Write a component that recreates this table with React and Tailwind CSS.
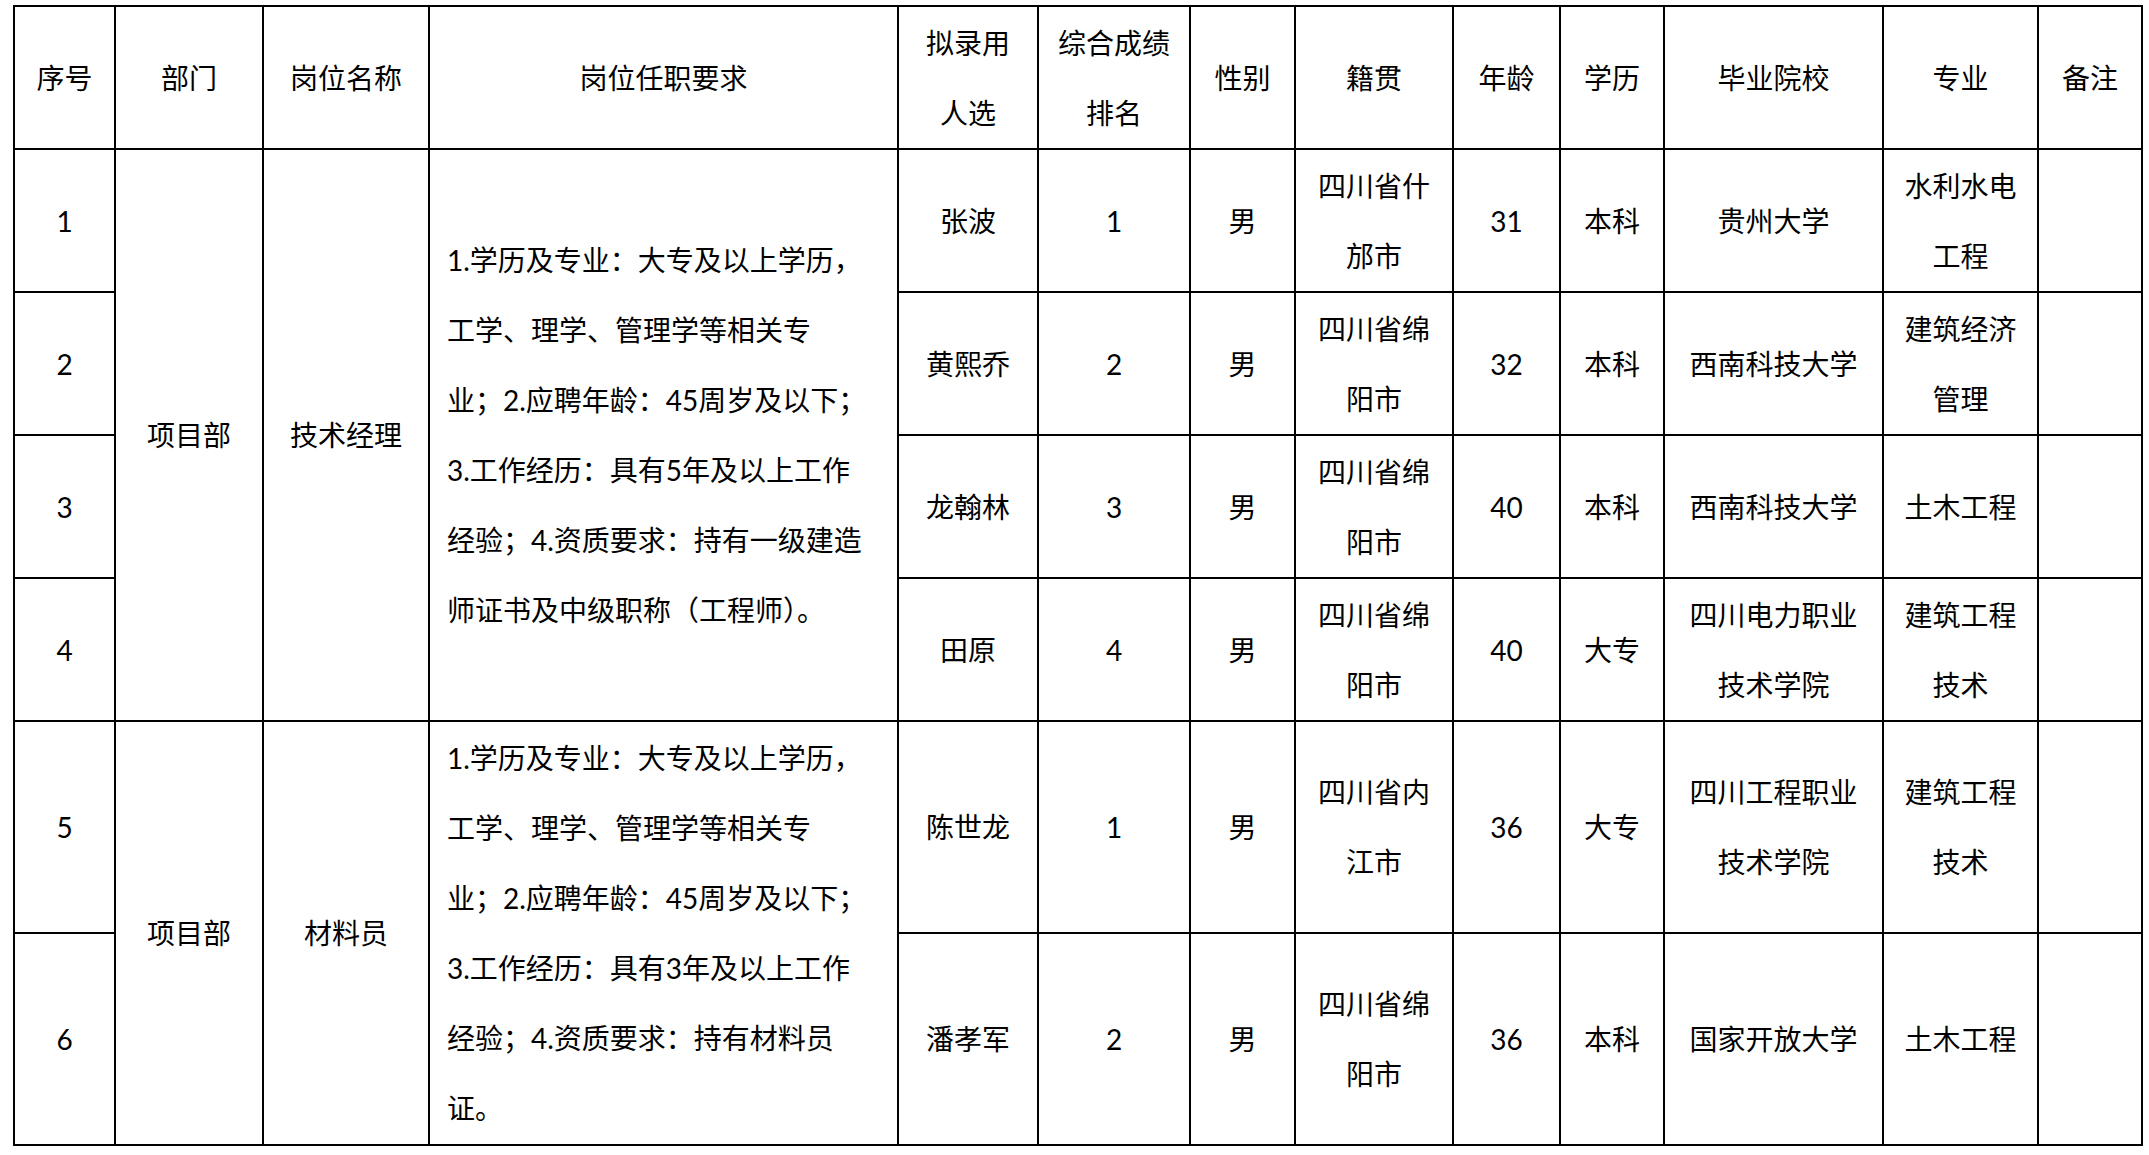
import React from 'react';

const cols = [101, 148, 166, 469, 140, 152, 105, 158, 107, 104, 219, 155, 104];

const headers = [
  ['序号'],
  ['部门'],
  ['岗位名称'],
  ['岗位任职要求'],
  ['拟录用', '人选'],
  ['综合成绩', '排名'],
  ['性别'],
  ['籍贯'],
  ['年龄'],
  ['学历'],
  ['毕业院校'],
  ['专业'],
  ['备注'],
];

const groups = [
  {
    dept: '项目部',
    post: '技术经理',
    req: [
      '1.学历及专业：大专及以上学历，',
      '工学、理学、管理学等相关专',
      '业；2.应聘年龄：45周岁及以下；',
      '3.工作经历：具有5年及以上工作',
      '经验；4.资质要求：持有一级建造',
      '师证书及中级职称（工程师）。',
    ],
    rowH: 'h-[143px]',
    people: [
      { no: '1', name: '张波', rank: '1', sex: '男', home: ['四川省什', '邡市'], age: '31', edu: '本科', school: ['贵州大学'], major: ['水利水电', '工程'] },
      { no: '2', name: '黄熙乔', rank: '2', sex: '男', home: ['四川省绵', '阳市'], age: '32', edu: '本科', school: ['西南科技大学'], major: ['建筑经济', '管理'] },
      { no: '3', name: '龙翰林', rank: '3', sex: '男', home: ['四川省绵', '阳市'], age: '40', edu: '本科', school: ['西南科技大学'], major: ['土木工程'] },
      { no: '4', name: '田原', rank: '4', sex: '男', home: ['四川省绵', '阳市'], age: '40', edu: '大专', school: ['四川电力职业', '技术学院'], major: ['建筑工程', '技术'] },
    ],
  },
  {
    dept: '项目部',
    post: '材料员',
    req: [
      '1.学历及专业：大专及以上学历，',
      '工学、理学、管理学等相关专',
      '业；2.应聘年龄：45周岁及以下；',
      '3.工作经历：具有3年及以上工作',
      '经验；4.资质要求：持有材料员',
      '证。',
    ],
    rowH: 'h-[212px]',
    people: [
      { no: '5', name: '陈世龙', rank: '1', sex: '男', home: ['四川省内', '江市'], age: '36', edu: '大专', school: ['四川工程职业', '技术学院'], major: ['建筑工程', '技术'] },
      { no: '6', name: '潘孝军', rank: '2', sex: '男', home: ['四川省绵', '阳市'], age: '36', edu: '本科', school: ['国家开放大学'], major: ['土木工程'] },
    ],
  },
];

const cell = 'border-2 border-black p-0 text-center align-middle';

const Lines = ({ lines }) => (
  <>
    {lines.map((l, i) => (
      <div key={i} className="whitespace-nowrap">{l}</div>
    ))}
  </>
);

export default function App() {
  return (
    <div className="min-h-screen bg-white pl-[13px] pt-[5px] text-black font-[Lato,'Noto_Sans_CJK_SC',sans-serif] text-[28px] leading-[70px]">
      <table className="table-fixed border-collapse w-[2130px]">
        <colgroup>
          {cols.map((w, i) => (
            <col key={i} style={{ width: w }} />
          ))}
        </colgroup>
        <thead>
          <tr className="h-[143px]">
            {headers.map((h, i) => (
              <th key={i} className={`${cell} font-normal`}>
                <Lines lines={h} />
              </th>
            ))}
          </tr>
        </thead>
        <tbody>
          {groups.map((g) =>
            g.people.map((p, i) => (
              <tr key={p.no} className={g.rowH}>
                <td className={cell}>{p.no}</td>
                {i === 0 && (
                  <>
                    <td className={cell} rowSpan={g.people.length}>{g.dept}</td>
                    <td className={cell} rowSpan={g.people.length}>{g.post}</td>
                    <td className={`${cell} !text-left pl-[17px]`} rowSpan={g.people.length}>
                      <Lines lines={g.req} />
                    </td>
                  </>
                )}
                <td className={cell}>{p.name}</td>
                <td className={cell}>{p.rank}</td>
                <td className={cell}>{p.sex}</td>
                <td className={cell}><Lines lines={p.home} /></td>
                <td className={cell}>{p.age}</td>
                <td className={cell}>{p.edu}</td>
                <td className={cell}><Lines lines={p.school} /></td>
                <td className={cell}><Lines lines={p.major} /></td>
                <td className={cell}></td>
              </tr>
            ))
          )}
        </tbody>
      </table>
    </div>
  );
}
